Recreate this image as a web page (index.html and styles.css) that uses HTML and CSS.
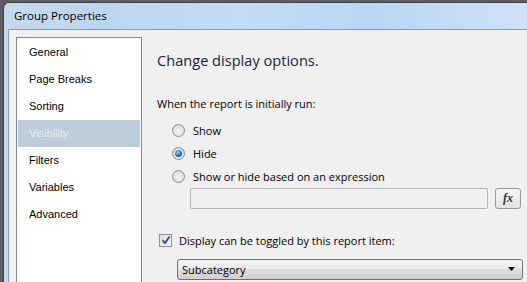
FILE: index.html
```html
<!DOCTYPE html>
<html lang="en">
<head>
    <meta charset="UTF-8">
    <title>Group Properties</title>
    <link rel="stylesheet" href="styles.css">
</head>
<body>
    <div class="window">
        <div class="titlebar">Group Properties</div>
        <div class="client">
            <ul class="pages">
                <li>General</li>
                <li>Page Breaks</li>
                <li>Sorting</li>
                <li class="selected">Visibility</li>
                <li>Filters</li>
                <li>Variables</li>
                <li>Advanced</li>
            </ul>

            <div class="panel">
                <h1 class="heading">Change display options.</h1>
                <p class="label">When the report is initially run:</p>

                <div class="options">
                    <label class="option"><span class="radio"></span>Show</label>
                    <label class="option"><span class="radio checked"></span>Hide</label>
                    <label class="option"><span class="radio"></span>Show or hide based on an expression</label>
                    <div class="expr-row">
                        <div class="textbox"></div>
                        <div class="fx-btn">fx</div>
                    </div>
                </div>

                <label class="toggle"><span class="checkbox">
                    <svg width="10" height="10" viewBox="0 0 10 10"><path d="M1.5 5.2 L4 8 L8.6 1.4" fill="none" stroke="#2a4e8c" stroke-width="1.8"/></svg>
                </span>Display can be toggled by this report item:</label>

                <div class="dropdown">
                    <span>Subcategory</span>
                    <svg width="8" height="5" viewBox="0 0 8 5"><path d="M0 0 H7 L3.5 4 Z" fill="#000"/></svg>
                </div>
            </div>
        </div>
    </div>
</body>
</html>
```

FILE: styles.css
```css
:root {
    --face: #f0f0f0;
    --text: #000;
    --ui-font: 'Open Sans', 'Noto Sans', sans-serif;
}
html, body {
    margin: 0;
    padding: 0;
    height: 100%;
    overflow: hidden;
}
body {
    background: #5a5e62;
    padding: 2px 0 0 3px;
    box-sizing: border-box;
}
.window {
    height: 100%;
    border-left: 1px solid #3a4450;
    border-top: 1px solid #3a4450;
    border-radius: 6px 0 0 0;
    background: linear-gradient(90deg, #c6d9ec 0%, #bcd6f0 20%, #c3dcf5 45%, #b8d6f4 70%, #cfe2f5 100%);
    padding-left: 4px;
    display: flex;
    flex-direction: column;
}
.titlebar {
    height: 26px;
    line-height: 25px;
    padding-left: 6px;
    font-family: var(--ui-font);
    font-size: 11.5px;
    color: #000;
}
.client {
    flex: 1;
    background: var(--face);
    border-left: 1px solid #8e9aa8;
    border-top: 1px solid #8e9aa8;
    display: flex;
    padding: 7px 0 0 7px;
    gap: 15px;
}
.pages {
    list-style: none;
    margin: 0;
    padding: 1px 1px;
    width: 122px;
    background: #fff;
    border: 1px solid #828790;
    border-bottom: none;
    font-family: 'Liberation Sans', Arial, sans-serif;
    font-size: 11px;
    color: #000;
}
.pages li {
    height: 27px;
    line-height: 27px;
    padding-left: 11px;
}
.pages li.selected {
    background: #bfcddb;
    color: #e6ebf1;
}
.panel {
    flex: 1;
    font-family: var(--ui-font);
    font-size: 11px;
    color: var(--text);
}
.heading {
    margin: 12px 0 0;
    font-size: 14.6px;
    font-weight: normal;
    color: #1a2438;
    line-height: 22px;
}
.label {
    margin: 25px 0 0;
    line-height: 16px;
}
.options {
    padding-left: 15px;
    margin-top: 7px;
}
.option {
    display: flex;
    align-items: center;
    height: 23px;
}
.radio {
    width: 11px;
    height: 11px;
    border-radius: 50%;
    border: 1px solid #8d8d8d;
    background: radial-gradient(circle at 50% 60%, #f4f4f4 0%, #e0e0e0 60%, #cfcfcf 100%);
    margin-right: 8px;
    position: relative;
    flex: none;
}
.radio.checked::after {
    content: "";
    position: absolute;
    left: 2px;
    top: 2px;
    width: 7px;
    height: 7px;
    border-radius: 50%;
    background: radial-gradient(circle at 40% 35%, #8fd0f5 0%, #1b6fb0 55%, #0c3f73 100%);
}
.expr-row {
    display: flex;
    align-items: center;
    gap: 7px;
    padding-left: 18px;
}
.textbox {
    width: 296px;
    height: 19px;
    background: var(--face);
    border: 1px solid #b5b5b5;
    border-radius: 2px;
}
.fx-btn {
    width: 24px;
    height: 19px;
    border: 1px solid #9a9a9a;
    border-radius: 3px;
    background: linear-gradient(#f6f6f6, #e3e3e3);
    font-family: 'Liberation Serif', serif;
    font-style: italic;
    font-weight: bold;
    font-size: 12px;
    line-height: 18px;
    text-align: center;
    color: #333;
}
.toggle {
    display: flex;
    align-items: center;
    margin-top: 24px;
    padding-left: 2px;
    height: 14px;
}
.checkbox {
    width: 11px;
    height: 11px;
    border: 1px solid #8f8f8f;
    background: linear-gradient(135deg, #dcdcdc, #f8f8f8);
    margin-right: 7px;
    display: flex;
    align-items: center;
    justify-content: center;
}
.dropdown {
    margin: 12px 4px 0 20px;
    height: 19px;
    border: 1px solid #707070;
    border-radius: 3px;
    background: linear-gradient(#f2f2f2 0%, #ebebeb 45%, #dddddd 50%, #cfcfcf 100%);
    display: flex;
    align-items: center;
    justify-content: space-between;
    padding: 0 6px 0 4px;
}
```
